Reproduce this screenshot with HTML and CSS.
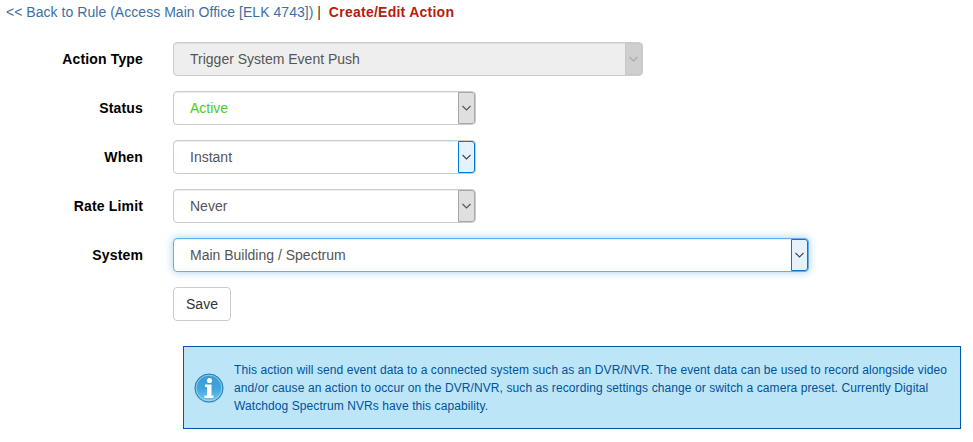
FILE: index.html
```html
<!DOCTYPE html>
<html lang="en">
<head>
    <meta charset="utf-8">
    <title>Create/Edit Action</title>
    <link rel="stylesheet" href="styles.css">
</head>
<body>
    <div class="breadcrumb">
        <a href="#">&lt;&lt; Back to Rule (Access Main Office [ELK 4743])</a> |
        <span class="current">Create/Edit Action</span>
    </div>
    <form class="action-form">
        <div class="form-row">
            <label>Action Type</label>
            <div class="select select-wide is-disabled">
                <span class="select-value">Trigger System Event Push</span>
                <span class="select-arrow"><svg width="9" height="6" viewBox="0 0 9 6"><path d="M.5 1l4 4 4-4" fill="none" stroke="#a8a8a8" stroke-width="1.1"/></svg></span>
            </div>
        </div>
        <div class="form-row">
            <label>Status</label>
            <div class="select">
                <span class="select-value status-active">Active</span>
                <span class="select-arrow"><svg width="9" height="6" viewBox="0 0 9 6"><path d="M.5 1l4 4 4-4" fill="none" stroke="#555" stroke-width="1.1"/></svg></span>
            </div>
        </div>
        <div class="form-row">
            <label>When</label>
            <div class="select is-hover">
                <span class="select-value">Instant</span>
                <span class="select-arrow"><svg width="9" height="6" viewBox="0 0 9 6"><path d="M.5 1l4 4 4-4" fill="none" stroke="#444" stroke-width="1.1"/></svg></span>
            </div>
        </div>
        <div class="form-row">
            <label>Rate Limit</label>
            <div class="select">
                <span class="select-value">Never</span>
                <span class="select-arrow"><svg width="9" height="6" viewBox="0 0 9 6"><path d="M.5 1l4 4 4-4" fill="none" stroke="#555" stroke-width="1.1"/></svg></span>
            </div>
        </div>
        <div class="form-row">
            <label>System</label>
            <div class="select select-full is-hover is-focus">
                <span class="select-value">Main Building / Spectrum</span>
                <span class="select-arrow"><svg width="9" height="6" viewBox="0 0 9 6"><path d="M.5 1l4 4 4-4" fill="none" stroke="#444" stroke-width="1.1"/></svg></span>
            </div>
        </div>
        <div class="form-row">
            <label></label>
            <button type="button" class="btn">Save</button>
        </div>
    </form>
    <div class="info-box">
        <svg class="info-icon" width="30" height="30" viewBox="0 0 30 30">
            <defs>
                <linearGradient id="infoFill" x1="0" y1="0" x2="0" y2="1">
                    <stop offset="0" stop-color="#3c9ad6"/>
                    <stop offset="0.5" stop-color="#3fa3dc"/>
                    <stop offset="1" stop-color="#6fcdf0"/>
                </linearGradient>
            </defs>
            <circle cx="15" cy="15.500" r="14.500" fill="#2f7ca8" opacity="0.3"/>
            <circle cx="15" cy="15" r="14" fill="url(#infoFill)" stroke="#2c7eb0" stroke-width="1"/>
            <circle cx="15" cy="15" r="12.800" fill="none" stroke="#b4e3f7" stroke-width="0.8" opacity="0.8"/>
            <circle cx="15.500" cy="7.500" r="2.600" fill="#fff"/>
            <path d="M11 11.500h6.500v11h2v2.500h-9v-2.500h2.500v-8.500h-2z" fill="#fff"/>
        </svg>
        <p>This action will send event data to a connected system such as an DVR/NVR. The event data can be used to record alongside video and/or cause an action to occur on the DVR/NVR, such as recording settings change or switch a camera preset. Currently Digital Watchdog Spectrum NVRs have this capability.</p>
    </div>
</body>
</html>
```

FILE: styles.css
```css
body {
    font-family: "Liberation Sans", Arial, sans-serif;
    font-size: 14px;
    line-height: 20px;
    color: #333;
    background-color: #fff;
    margin: 0;
    padding: 2px 12px 0 6px;
}
.breadcrumb {
    margin-bottom: 20px;
}
.breadcrumb a {
    color: #3e6fa3;
    text-decoration: none;
    letter-spacing: 0.04px;
}
.breadcrumb .current {
    color: #b71c0c;
    font-weight: bold;
    margin-left: 4px;
    letter-spacing: 0.25px;
}
.form-row {
    display: flex;
    align-items: center;
    margin-bottom: 15px;
}
.form-row label {
    width: 137px;
    margin-right: 30px;
    text-align: right;
    font-weight: bold;
    color: #000;
    letter-spacing: 0.15px;
}
.select {
    display: flex;
    justify-content: space-between;
    width: 303px;
    height: 34px;
    box-sizing: border-box;
    border: 1px solid #ccc;
    border-radius: 4px;
    box-shadow: inset 0 1px 1px rgba(0, 0, 0, 0.075);
    background-color: #fff;
    color: #555;
}
.select-wide {
    width: 470px;
}
.select-full {
    width: 636px;
}
.select-value {
    padding-left: 16px;
    line-height: 32px;
}
.status-active {
    color: #4ccb1f;
}
.select-arrow {
    display: flex;
    align-items: center;
    justify-content: center;
    width: 17px;
    box-sizing: border-box;
    border: 1px solid #a8a8a8;
    border-radius: 0 3px 3px 0;
    background-color: #dfdfdf;
}
.is-disabled {
    background-color: #eee;
}
.is-disabled .select-arrow {
    border-color: #c8c8c8;
    background-color: #cfcfcf;
}
.is-hover .select-arrow {
    border-color: #0078d7;
    background-color: #e5f1fb;
}
.is-focus {
    border-color: #66afe9;
    box-shadow: inset 0 1px 1px rgba(0, 0, 0, 0.075), 0 0 8px rgba(102, 175, 233, 0.6);
}
.btn {
    font-family: inherit;
    font-size: 14px;
    line-height: 20px;
    color: #333;
    background-color: #fff;
    width: 58px;
    height: 34px;
    padding: 0;
    border: 1px solid #ccc;
    border-radius: 4px;
}
.info-box {
    display: flex;
    align-items: center;
    margin: 25px 0 0 177px;
    width: 778px;
    height: 83px;
    box-sizing: border-box;
    padding: 0 10px;
    border: 1px solid #0056a8;
    background-color: #bde5f8;
}
.info-icon {
    flex: none;
    margin-right: 10px;
}
.info-box p {
    margin: 0;
    font-size: 12px;
    line-height: 18px;
    color: #00529b;
    letter-spacing: 0.09px;
}
```
